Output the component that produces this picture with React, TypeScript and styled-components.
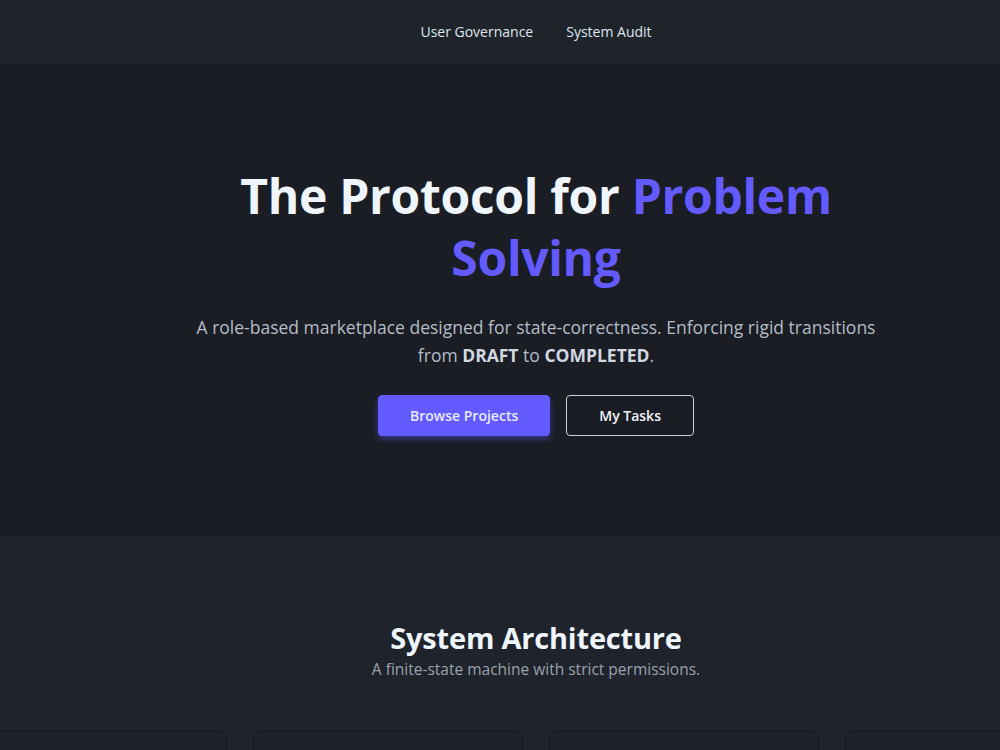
import styled, { createGlobalStyle } from 'styled-components';

const GlobalStyle = createGlobalStyle`
  html, body {
    margin: 0;
    padding: 0;
    background: #1a1d24;
    overflow-x: hidden;
  }

  body {
    font-family: 'Open Sans', 'Noto Sans', sans-serif;
    color: #e6edf3;
  }
`;

const Page = styled.div`
  width: 1072px;
  display: flex;
  flex-direction: column;
`;

const NavBar = styled.nav`
  height: 64px;
  background: #1f242b;
  display: flex;
  align-items: center;
  justify-content: center;
  gap: 33px;
`;

const NavLink = styled.a`
  color: #dfe6ee;
  font-size: 14px;
  text-decoration: none;
  cursor: pointer;
  margin-top: -2px;
`;

const Hero = styled.section`
  background: #1a1d24;
  height: 472px;
  box-sizing: border-box;
  padding-top: 101px;
  display: flex;
  flex-direction: column;
  align-items: center;
  text-align: center;
`;

const Title = styled.h1`
  margin: 0;
  max-width: 700px;
  font-size: 48px;
  line-height: 62px;
  font-weight: 700;
  color: #eef6fc;
  letter-spacing: -0.3px;
`;

const Accent = styled.span`
  color: #635bff;
`;

const Lead = styled.p`
  margin: 24px 0 0;
  max-width: 700px;
  font-size: 17.5px;
  line-height: 28px;
  color: #b4bcc7;

  strong {
    color: #d2d8e0;
    font-weight: 700;
  }
`;

const Actions = styled.div`
  margin-top: 26px;
  display: flex;
  gap: 16px;
`;

const Button = styled.button<{ $variant: 'primary' | 'outline' }>`
  height: 41px;
  padding: 0 ${(p) => (p.$variant === 'primary' ? '31px' : '32px')};
  border-radius: 4px;
  font-family: inherit;
  font-size: 14px;
  font-weight: 600;
  cursor: pointer;
  color: ${(p) => (p.$variant === 'primary' ? '#e8eaff' : '#f2f5f8')};
  background: ${(p) => (p.$variant === 'primary' ? '#635bff' : 'transparent')};
  border: 1px solid ${(p) => (p.$variant === 'primary' ? '#635bff' : '#c9d0d8')};
  box-shadow: ${(p) =>
    p.$variant === 'primary' ? '0 3px 6px rgba(99, 91, 255, 0.45)' : 'none'};
`;

const Features = styled.section`
  background: #1f232b;
  padding-top: 82px;
  display: flex;
  flex-direction: column;
  align-items: center;
  text-align: center;
`;

const SectionTitle = styled.h2`
  margin: 0;
  font-size: 29px;
  line-height: 40px;
  font-weight: 700;
  color: #eef6fc;
  letter-spacing: -0.2px;
`;

const SectionSub = styled.p`
  margin: 0;
  font-size: 15.5px;
  line-height: 22px;
  color: #9aa2ad;
`;

const CardRow = styled.div`
  width: 100%;
  margin-top: 51px;
  display: flex;
  justify-content: center;
  gap: 26px;
`;

const Card = styled.div`
  flex: 0 0 270px;
  height: 220px;
  box-sizing: border-box;
  background: #1e232b;
  border: 1px solid #171a20;
  border-radius: 8px;
  box-shadow: 0 0 0 1px rgba(0, 0, 0, 0.08);
`;

const cards = ['client', 'solver', 'admin', 'audit'];

export default function App() {
  return (
    <>
      <GlobalStyle />
      <Page>
        <NavBar>
          <NavLink>User Governance</NavLink>
          <NavLink>System Audit</NavLink>
        </NavBar>

        <Hero>
          <Title>
            The Protocol for <Accent>Problem Solving</Accent>
          </Title>
          <Lead>
            A role-based marketplace designed for state-correctness. Enforcing rigid transitions
            from <strong>DRAFT</strong> to <strong>COMPLETED</strong>.
          </Lead>
          <Actions>
            <Button $variant="primary">Browse Projects</Button>
            <Button $variant="outline">My Tasks</Button>
          </Actions>
        </Hero>

        <Features>
          <SectionTitle>System Architecture</SectionTitle>
          <SectionSub>A finite-state machine with strict permissions.</SectionSub>
          <CardRow>
            {cards.map((c) => (
              <Card key={c} />
            ))}
          </CardRow>
        </Features>
      </Page>
    </>
  );
}
